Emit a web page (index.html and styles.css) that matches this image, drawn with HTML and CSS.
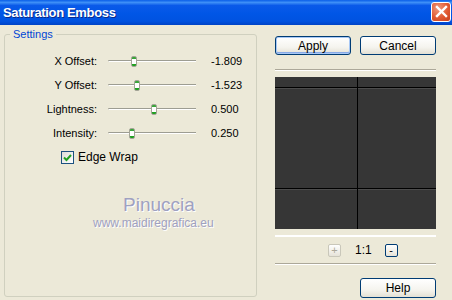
FILE: index.html
```html
<!DOCTYPE html>
<html lang="en">
<head>
    <meta charset="UTF-8">
    <title>Saturation Emboss</title>
    <link rel="stylesheet" href="styles.css">
</head>
<body>
    <div class="titlebar">
        <span class="title">Saturation Emboss</span>
        <div class="close-btn">
            <svg width="13" height="13" viewBox="0 0 13 13"><path d="M2 2 L11 11 M11 2 L2 11" stroke="#fff" stroke-width="2.4" stroke-linecap="square"/></svg>
        </div>
    </div>
    <div class="window-body">
        <fieldset class="settings">
            <legend>Settings</legend>
            <div class="rows">
                <label>X Offset:</label>
                <div class="slider"><div class="track"></div><div class="thumb" style="left: 23px"></div></div>
                <span class="value">-1.809</span>

                <label>Y Offset:</label>
                <div class="slider"><div class="track"></div><div class="thumb" style="left: 26px"></div></div>
                <span class="value">-1.523</span>

                <label>Lightness:</label>
                <div class="slider"><div class="track"></div><div class="thumb" style="left: 43px"></div></div>
                <span class="value">0.500</span>

                <label>Intensity:</label>
                <div class="slider"><div class="track"></div><div class="thumb" style="left: 21px"></div></div>
                <span class="value">0.250</span>

                <div class="check-row">
                    <span class="checkbox">
                        <svg width="11" height="11" viewBox="0 0 11 11"><path d="M2 5.5 L4.5 8 L9 3" fill="none" stroke="#21a121" stroke-width="2"/></svg>
                    </span>
                    <span>Edge Wrap</span>
                </div>
            </div>
            <div class="watermark">
                <div class="wm-name">Pinuccia</div>
                <div class="wm-url">www.maidiregrafica.eu</div>
            </div>
        </fieldset>

        <div class="side">
            <div class="btn-row">
                <button class="xp-btn default">Apply</button>
                <button class="xp-btn">Cancel</button>
            </div>
            <div class="sep"></div>
            <div class="preview">
                <div class="cell"></div><div class="vline"></div><div class="cell"></div>
                <div class="hline"></div><div class="hline"></div><div class="hline"></div>
                <div class="cell lit"></div><div class="vline"></div><div class="cell lit"></div>
                <div class="hline"></div><div class="hline"></div><div class="hline"></div>
                <div class="cell lit"></div><div class="vline"></div><div class="cell lit"></div>
            </div>
            <div class="white-bar"></div>
            <div class="zoom-row">
                <span class="mini-btn disabled">+</span>
                <span class="ratio">1:1</span>
                <span class="mini-btn">-</span>
            </div>
            <div class="sep sep-low"></div>
            <button class="xp-btn help">Help</button>
        </div>
    </div>
</body>
</html>
```

FILE: styles.css
```css
* {
    box-sizing: border-box;
}
html, body {
    margin: 0;
    padding: 0;
}
body {
    width: 452px;
    height: 300px;
    overflow: hidden;
    background: #ece9d8;
    font-family: "Liberation Sans", Arial, sans-serif;
    font-size: 11px;
    color: #000;
}

.titlebar {
    height: 25px;
    display: flex;
    align-items: center;
    justify-content: space-between;
    padding: 0 1px 0 3px;
    background: linear-gradient(#0a5fe8 0%, #3d8ff7 10%, #0a5ae9 22%, #0056e6 55%, #0052e0 85%, #0043c5 100%);
}
.title {
    color: #fff;
    font-weight: bold;
    font-size: 13px;
    text-shadow: 1px 1px 0 #0a2a8a;
    letter-spacing: -0.35px;
}
.close-btn {
    width: 20px;
    height: 20px;
    margin-top: -2px;
    border: 1px solid #fff;
    border-radius: 3px;
    background: radial-gradient(circle at 35% 30%, #f09a7e, #e05a33 55%, #c6401e);
    display: flex;
    align-items: center;
    justify-content: center;
}

.window-body {
    display: flex;
    padding-left: 4px;
}

.settings {
    margin: 3px 0 0 0;
    padding: 0;
    width: 253px;
    height: 269px;
    border: 1px solid #d0d0bf;
    border-radius: 3px;
}
.settings legend {
    margin-left: 5px;
    padding: 0 3px;
    color: #0046d5;
    line-height: 13px;
}

.rows {
    display: grid;
    grid-template-columns: 92px 88px 1fr;
    column-gap: 11px;
    grid-auto-rows: 24px;
    padding-top: 8px;
    align-items: center;
}
.rows label {
    text-align: right;
}
.rows .value {
    margin-left: 4px;
}

.slider {
    position: relative;
    height: 24px;
}
.track {
    margin-top: 11px;
    height: 2px;
    border-top: 1px solid #9d9d92;
    border-bottom: 1px solid #fff;
    border-left: 1px solid #c8c5b4;
}
.thumb {
    position: absolute;
    top: 7px;
    width: 6px;
    height: 11px;
    border: 1px solid #a4a497;
    border-radius: 2px;
    background: linear-gradient(#3aa63a 0, #3aa63a 2px, #fff 2px, #fff 7px, #21a121 7px);
}

.check-row {
    grid-column: 1 / -1;
    display: flex;
    align-items: center;
    gap: 4px;
    padding-left: 56px;
    font-size: 12px;
}
.checkbox {
    width: 13px;
    height: 13px;
    border: 1px solid #1c5180;
    background: linear-gradient(135deg, #dcdcd7, #fff);
    display: flex;
    align-items: center;
    justify-content: center;
}

.watermark {
    margin-top: 25px;
    color: #9fa1c0;
    text-shadow: 1px 1px 0 #fff;
}
.wm-name {
    font-size: 19px;
    padding-left: 118px;
    line-height: 22px;
}
.wm-url {
    font-size: 12px;
    padding-left: 88px;
    line-height: 14px;
}

.side {
    display: flex;
    flex-direction: column;
    width: 161px;
    margin-left: 18px;
    padding-top: 11px;
}
.btn-row {
    display: flex;
    justify-content: space-between;
}
.xp-btn {
    width: 76px;
    height: 19px;
    padding: 0;
    border: 1px solid #003c74;
    border-radius: 3px;
    background: linear-gradient(#ffffff 0%, #f5f4ee 60%, #e3e0d4 100%);
    font-family: "Liberation Sans", Arial, sans-serif;
    font-size: 12px;
    color: #000;
}
.xp-btn.default {
    box-shadow: inset 0 0 0 1px #a8c8f5, inset 0 -1px 0 1px #87a9e6;
}
.help {
    align-self: flex-end;
    height: 20px;
}

.sep {
    margin-top: 14px;
    height: 2px;
    border-top: 1px solid #aca899;
    border-bottom: 1px solid #fff;
}
.sep-low {
    margin-top: 7px;
    margin-bottom: 13px;
}

.preview {
    margin-top: 6px;
    display: grid;
    grid-template-columns: 82px 1px 78px;
    grid-template-rows: 10px 1px 100px 1px 40px;
    width: 161px;
    background: #000;
}
.cell {
    background: #363636;
}
.cell.lit {
    border-top: 1px solid #4c4c4c;
}
.vline, .hline {
    background: #000;
}

.white-bar {
    margin-top: 6px;
    height: 2px;
    background: #fff;
}

.zoom-row {
    display: flex;
    align-items: center;
    margin-top: 7px;
    padding-left: 53px;
    height: 12px;
}
.mini-btn {
    width: 13px;
    height: 13px;
    border: 1px solid #003c74;
    border-radius: 2px;
    background: linear-gradient(#fff, #e6e3d8);
    display: flex;
    align-items: center;
    justify-content: center;
    line-height: 1;
    font-size: 11px;
}
.mini-btn.disabled {
    border-color: #c9c7ba;
    color: #aca899;
}
.ratio {
    margin: 0 13px 0 14px;
    font-size: 12px;
}
```
